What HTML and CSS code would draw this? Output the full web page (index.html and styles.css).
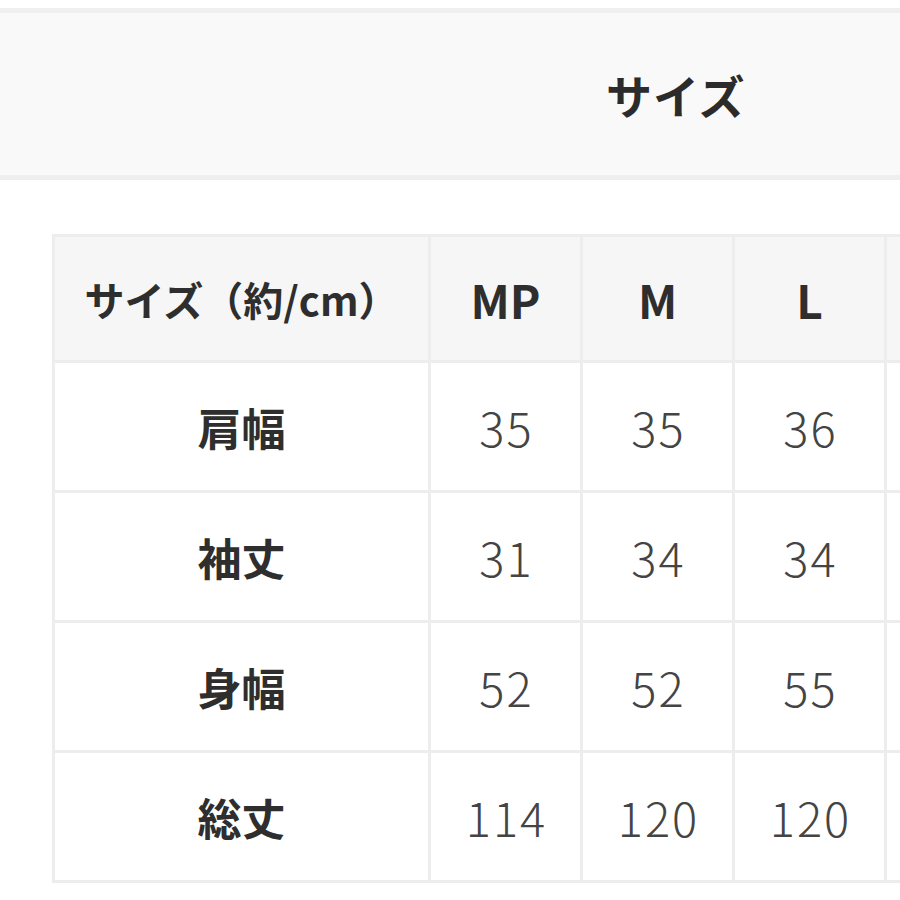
FILE: index.html
```html
<!DOCTYPE html>
<html lang="ja">
<head>
<meta charset="utf-8">
<link rel="stylesheet" href="styles.css">
</head>
<body>
<div class="page">
  <div class="title-bar">
    <h2 class="title">サイズ</h2>
  </div>
  <div class="table-wrap">
    <table class="size-table">
      <colgroup>
        <col class="c-label">
        <col class="c-size">
        <col class="c-size">
        <col class="c-size">
        <col class="c-size">
      </colgroup>
      <thead>
        <tr>
          <th class="label">サイズ（約/cm）</th>
          <th>MP</th>
          <th>M</th>
          <th>L</th>
          <th></th>
        </tr>
      </thead>
      <tbody>
        <tr><th class="label">肩幅</th><td>35</td><td>35</td><td>36</td><td></td></tr>
        <tr><th class="label">袖丈</th><td>31</td><td>34</td><td>34</td><td></td></tr>
        <tr><th class="label">身幅</th><td>52</td><td>52</td><td>55</td><td></td></tr>
        <tr><th class="label">総丈</th><td>114</td><td>120</td><td>120</td><td></td></tr>
      </tbody>
    </table>
  </div>
</div>
</body>
</html>
```

FILE: styles.css
```css
html, body {
  margin: 0;
  padding: 0;
  background: #ffffff;
}

.page {
  width: 900px;
  height: 900px;
  overflow: hidden;
  font-family: "Noto Sans CJK JP", "Noto Sans", sans-serif;
  color: #333333;
}

.title-bar {
  margin-top: 8px;
  height: 162px;
  background: #f9f9f9;
  border-top: 5px solid #efefef;
  border-bottom: 5px solid #efefef;
  display: flex;
  align-items: center;
  padding-left: 606px;
  box-sizing: content-box;
}

.title {
  margin: 0;
  font-size: 46px;
  font-weight: 700;
  letter-spacing: 1px;
  color: #2b2b2b;
  line-height: 1;
}

.table-wrap {
  margin-top: 54px;
  padding-left: 52px;
}

.size-table {
  border-collapse: collapse;
  table-layout: fixed;
  width: 985px;
}

.c-label { width: 376px; }
.c-size { width: 152px; }

.size-table th,
.size-table td {
  border: 3px solid #ededed;
  height: 127px;
  padding: 0;
  text-align: center;
  vertical-align: middle;
  line-height: 1;
}

.size-table thead th {
  height: 123px;
  background: #f6f6f6;
  font-size: 46px;
  font-weight: 700;
  color: #2e2e2e;
}

.size-table thead th.label {
  font-size: 40px;
  letter-spacing: 0;
}

.size-table tbody th.label {
  background: #ffffff;
  font-size: 44px;
  font-weight: 700;
  color: #2e2e2e;
}

.size-table td {
  background: #ffffff;
  font-size: 47px;
  font-weight: 300;
  letter-spacing: 2px;
  text-indent: 2px;
  color: #444444;
}
```
